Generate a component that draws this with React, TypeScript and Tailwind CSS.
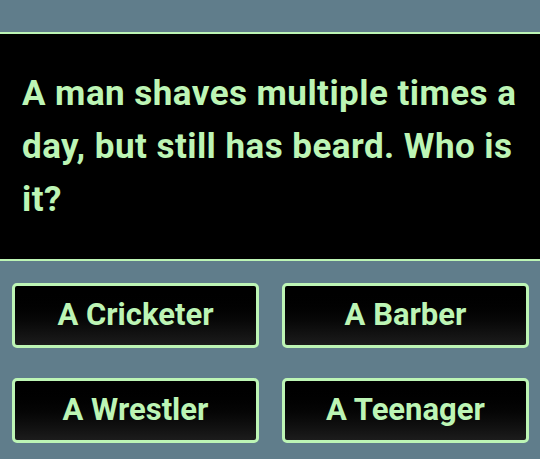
import React from 'react';

const answers = ['A Cricketer', 'A Barber', 'A Wrestler', 'A Teenager'];

export default function App() {
  return (
    <div className="w-[540px] h-[459px] bg-[#607d8b] overflow-hidden font-['Roboto',sans-serif]">
      {/* Question panel */}
      <div className="mt-[32px] bg-black border-y-[2px] border-[#bdf5b5] pl-[22px] pr-[14px] py-[33px]">
        <p className="text-[35px] leading-[53px] font-bold text-[#bdf5b5] tracking-[0.45px]">
          A man shaves multiple times a day, but still has beard. Who is it?
        </p>
      </div>

      {/* Answers */}
      <div className="grid grid-cols-2 gap-x-[23px] gap-y-[30px] pl-[12px] pr-[11px] pt-[22px]">
        {answers.map((a) => (
          <button
            key={a}
            className="h-[65px] rounded-[5px] border-[3px] border-[#bdf5b5] bg-gradient-to-b from-black to-[#1c1c1c] text-[#bdf5b5] text-[31px] font-bold flex items-center justify-center"
          >
            {a}
          </button>
        ))}
      </div>
    </div>
  );
}
